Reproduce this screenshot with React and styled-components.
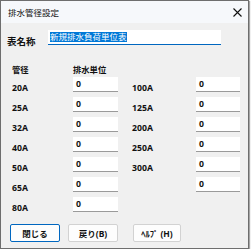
import React from "react";
import styled, { createGlobalStyle } from "styled-components";

const Global = createGlobalStyle`
  html, body { margin: 0; padding: 0; background: #ffffff; }
  body { font-family: "Noto Sans", "Noto Sans CJK JP", sans-serif; }
`;

const Window = styled.div`
  width: 249px;
  height: 249px;
  box-sizing: border-box;
  border: 1px solid #6e6e6e;
  box-shadow: 1px 1px 1px rgba(0,0,0,0.35);
  display: flex;
  flex-direction: column;
  background: #f0f0f0;
`;

const TitleBar = styled.div`
  height: 22px;
  flex: none;
  display: flex;
  align-items: center;
  justify-content: space-between;
  padding: 0 6px 0 7px;
  background: #f6f8fb;
  font-size: 8.5px;
  color: #111;
`;

const CloseIcon = styled.svg`
  width: 9px;
  height: 9px;
`;

const Body = styled.div`
  flex: 1;
  display: flex;
  flex-direction: column;
  padding: 7px 0 0 0;
`;

const NameRow = styled.div`
  display: flex;
  align-items: flex-start;
  height: 15px;
  padding-left: 6px;
`;

const NameLabel = styled.div`
  width: 41px;
  font-size: 9.5px;
  font-weight: 700;
  line-height: 23px;
  color: #111;
`;

const NameInput = styled.div`
  width: 173px;
  height: 15px;
  box-sizing: border-box;
  background: #fff;
  border-bottom: 1.5px solid #0067c0;
  padding: 2px 0 0 2px;
  display: flex;
  align-items: flex-start;
`;

const Selected = styled.span`
  background: #0078d7;
  color: #fff;
  font-size: 8.5px;
  line-height: 9.5px;
  height: 9.5px;
  white-space: nowrap;
`;

const HeaderRow = styled.div`
  display: grid;
  grid-template-columns: 61px 60px;
  margin: 16px 0 1px 11px;
  height: 15px;
  align-items: center;
  font-size: 8.3px;
  font-weight: 700;
  color: #111;
`;

const HeaderCell = styled.div`
  padding-left: ${p => p.$indent || 0}px;
`;

const Grid = styled.div`
  display: grid;
  grid-template-columns: 61px 45px 14px 64px 44px;
  grid-auto-rows: 15px;
  row-gap: 5px;
  margin-left: 11px;
`;

const RowLabel = styled.div`
  grid-column: ${p => p.$col};
  font-size: 8.7px;
  font-weight: 700;
  line-height: 23px;
  height: 15px;
  align-self: start;
  color: #111;
  white-space: nowrap;
`;

const NumInput = styled.div`
  grid-column: ${p => p.$col};
  background: #fff;
  border-bottom: 1px solid #9a9a9a;
  box-sizing: border-box;
  height: 15px;
  padding-left: 3px;
  font-size: 8.7px;
  font-weight: 700;
  line-height: 14px;
  color: #111;
`;

const ButtonRow = styled.div`
  display: flex;
  margin: 12px 0 0 9px;
  gap: 8px;
`;

const Button = styled.div`
  width: ${p => p.$w || 50}px;
  height: 18px;
  box-sizing: border-box;
  margin-left: ${p => p.$ml || 0}px;
  background: #fdfdfd;
  border: 1px solid ${p => (p.$primary ? "#0067c0" : "#d2d2d2")};
  border-radius: 2px;
  display: flex;
  align-items: center;
  justify-content: center;
  font-size: 8.5px;
  font-weight: 700;
  color: #111;
  white-space: nowrap;
`;

const left = ["20A", "25A", "32A", "40A", "50A", "65A", "80A"];
const right = ["100A", "125A", "200A", "250A", "300A", "", null];

export default function App() {
  return (
    <>
      <Global />
      <Window>
        <TitleBar>
          <span>排水管径設定</span>
          <CloseIcon viewBox="0 0 9 9">
            <path d="M0.5 0.5 L8.5 8.5 M8.5 0.5 L0.5 8.5" stroke="#111" strokeWidth="1.1" />
          </CloseIcon>
        </TitleBar>
        <Body>
          <NameRow>
            <NameLabel>表名称</NameLabel>
            <NameInput>
              <Selected>新規排水負荷単位表</Selected>
            </NameInput>
          </NameRow>
          <HeaderRow>
            <HeaderCell>管径</HeaderCell>
            <HeaderCell>排水単位</HeaderCell>
          </HeaderRow>
          <Grid>
            {left.map((l, i) => (
              <React.Fragment key={l}>
                <RowLabel $col={1}>{l}</RowLabel>
                <NumInput $col={2}>0</NumInput>
                {right[i] !== null && (
                  <>
                    <RowLabel $col={4}>{right[i]}</RowLabel>
                    <NumInput $col={5}>0</NumInput>
                  </>
                )}
              </React.Fragment>
            ))}
          </Grid>
          <ButtonRow>
            <Button $primary>閉じる</Button>
            <Button>戻り(B)</Button>
            <Button $w={48} $ml={7}>ﾍﾙﾌﾟ (H)</Button>
          </ButtonRow>
        </Body>
      </Window>
    </>
  );
}
